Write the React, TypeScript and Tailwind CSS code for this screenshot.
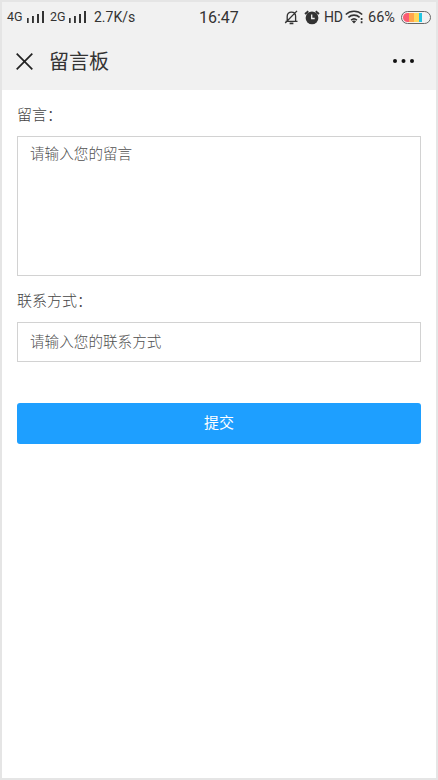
import { useState } from "react";

function SignalBars() {
  return (
    <svg width="18" height="13" viewBox="0 0 18 13" fill="#333" aria-hidden="true">
      <rect x="0" y="7" width="1.7" height="5" />
      <rect x="5" y="5" width="1.9" height="7" />
      <rect x="10" y="3" width="2" height="9" />
      <rect x="15" y="0" width="2" height="12" />
    </svg>
  );
}

function MutedBell() {
  return (
    <svg width="15" height="15" viewBox="0 0 15 15" fill="none" stroke="#333" strokeWidth="1.3" aria-hidden="true">
      <path d="M1.5 11.3h12M3.2 11V6.2c0-2.4 1.7-4.1 4.2-4.1s4.2 1.7 4.2 4.1V11M1.2 13 13 .9" />
      <path d="M5.6 13.4h3.8" strokeWidth="1.7" />
    </svg>
  );
}

function AlarmClock() {
  return (
    <svg width="16" height="15" viewBox="0 0 16 15" aria-hidden="true">
      <circle cx="8" cy="7.9" r="6.4" fill="#333" />
      <path d="M1 4 4.3 1.2M15 4l-3.3-2.8" stroke="#333" strokeWidth="1.8" />
      <path d="M7.7 4.5v4h3" fill="none" stroke="#f1f1f1" strokeWidth="1.3" />
    </svg>
  );
}

function Wifi() {
  return (
    <svg width="19" height="14" viewBox="0 0 19 14" fill="none" stroke="#333" strokeWidth="1.6" aria-hidden="true">
      <path d="M.8 4.5C5.5.2 12.5.2 17.2 4.5M3.4 7.4c3.3-3 7.9-3 11.2 0M6.1 10.2c1.7-1.5 4.1-1.5 5.8 0" />
      <path d="m6.9 11.2 2.1 2.3 2.1-2.3c-1.2-1-3-1-4.2 0Z" fill="#333" stroke="none" />
      <path d="M16.6 8v2M16.6 11.3v2" strokeWidth="1.7" />
    </svg>
  );
}

function Battery() {
  return (
    <div className="flex h-[13px] w-[30px] overflow-hidden rounded-full border border-[#666] p-px">
      <div className="flex w-[19px] overflow-hidden rounded-l-full">
        <span className="w-[6px] bg-[#fb5b72]" />
        <span className="w-[5px] bg-[#ffa54c]" />
        <span className="w-[5px] bg-[#ffd85a]" />
        <span className="w-[3px] bg-[#22c5e2]" />
      </div>
    </div>
  );
}

function StatusBar() {
  return (
    <div className="grid h-[30px] grid-cols-[192px_auto_1fr] items-center pr-[5px] pl-[5px] font-['Roboto','Noto_Sans_CJK_SC',sans-serif] text-[14px] leading-none text-[#333]">
      <div className="flex items-center">
        <span className="w-5 text-[12.5px]">4G</span>
        <SignalBars />
        <span className="ml-[5px] w-[19px] text-[12.5px]">2G</span>
        <SignalBars />
        <span className="ml-[7px]">2.7K/s</span>
      </div>
      <span className="pt-px text-[16px]">16:47</span>
      <div className="flex items-center justify-end">
        <MutedBell />
        <span className="ml-[5px]"><AlarmClock /></span>
        <span className="ml-1 w-[21px] tracking-[-0.3px]">HD</span>
        <Wifi />
        <span className="ml-1 w-[33px] pt-0.5 text-[14.5px]">66%</span>
        <Battery />
      </div>
    </div>
  );
}

export default function App() {
  const [message, setMessage] = useState("");
  const [contact, setContact] = useState("");

  return (
    <div className="h-[780px] w-[438px] overflow-hidden border-2 border-[#e5e5e5] bg-white font-['Noto_Sans_CJK_SC',sans-serif] text-[#444]">
      <header className="bg-[#f1f1f1]">
        <StatusBar />
        <div className="flex h-[58px] items-center pr-[22px] pl-3.5">
          <svg width="17" height="17" viewBox="0 0 17 17" stroke="#222" strokeWidth="1.7" aria-label="关闭">
            <path d="m.7.7 15.6 15.6M16.3.7.7 16.3" />
          </svg>
          <h1 className="ml-4 text-[20px] leading-none text-[#333]">留言板</h1>
          <svg className="ml-auto" width="21" height="4" viewBox="0 0 21 4" fill="#111" aria-label="更多">
            <circle cx="2" cy="2" r="2" />
            <circle cx="10.5" cy="2" r="2" />
            <circle cx="19" cy="2" r="2" />
          </svg>
        </div>
      </header>

      <form className="flex flex-col px-[15px] pt-3 text-[15px] font-light" onSubmit={(e) => e.preventDefault()}>
        <label htmlFor="message" className="leading-6">留言：</label>
        <textarea
          id="message"
          value={message}
          onChange={(e) => setMessage(e.target.value)}
          placeholder="请输入您的留言"
          className="mt-2.5 h-[140px] resize-none border border-[#d2d2d2] px-3 py-1 text-[14.6px] leading-6 outline-none placeholder:text-[#505050]"
        />
        <label htmlFor="contact" className="mt-3 leading-6">联系方式：</label>
        <input
          id="contact"
          value={contact}
          onChange={(e) => setContact(e.target.value)}
          placeholder="请输入您的联系方式"
          className="mt-2.5 h-10 border border-[#d2d2d2] px-3 pb-1 text-[14.6px] outline-none placeholder:text-[#505050]"
        />
        <button type="submit" className="mt-[41px] h-[41px] rounded-[3px] bg-[#1e9fff] pb-[3px] font-normal text-white">
          提交
        </button>
      </form>
    </div>
  );
}
